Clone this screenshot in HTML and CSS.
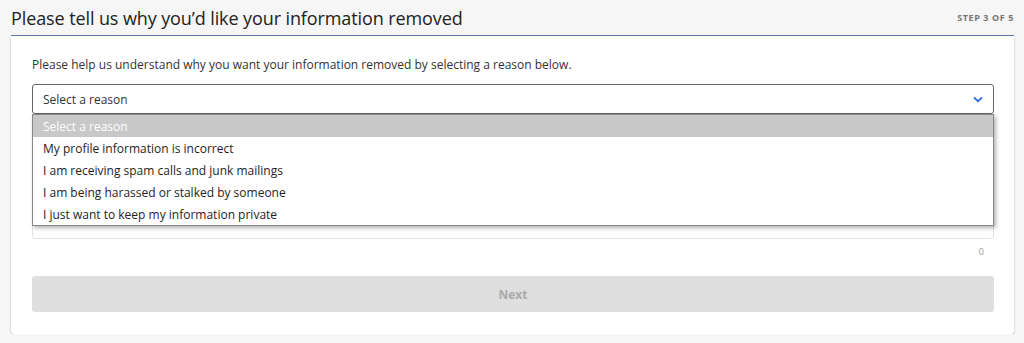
FILE: index.html
```html
<!DOCTYPE html>
<html lang="en">

<head>
    <meta charset="UTF-8">
    <meta name="viewport" content="width=device-width, initial-scale=1.0">
    <title>Remove my information</title>
    <link rel="stylesheet" href="styles.css">
</head>

<body>

    <div class="page">
        <div class="step-header">
            <h1>Please tell us why you’d like your information removed</h1>
            <span class="step-count">Step 3 of 5</span>
        </div>

        <div class="card">
            <p class="intro">Please help us understand why you want your information removed by selecting a reason below.</p>

            <div class="reason-field">
                <div class="reason-select">
                    <span>Select a reason</span>
                    <svg class="chevron" width="10" height="7" viewBox="0 0 10 7">
                        <path d="M1 1.5 L5 5.2 L9 1.5" fill="none" stroke="#2f6fe0" stroke-width="1.8"/>
                    </svg>
                </div>
                <ul class="reason-list">
                    <li class="placeholder">Select a reason</li>
                    <li>My profile information is incorrect</li>
                    <li>I am receiving spam calls and junk mailings</li>
                    <li>I am being harassed or stalked by someone</li>
                    <li>I just want to keep my information private</li>
                </ul>
            </div>

            <div class="details-box"></div>
            <div class="char-count">0</div>

            <button class="btn-next" disabled>Next</button>
        </div>
    </div>

</body>
</html>
```

FILE: styles.css
```css
body {
    margin: 0;
    font-family: "Open Sans", Arial, sans-serif;
    background-color: #f6f6f6;
    color: #333;
}

.page {
    padding: 0 10px 0 11px;
}

.step-header {
    display: flex;
    justify-content: space-between;
    align-items: center;
    height: 35px;
    border-bottom: 1px solid #6474aa;
}

.step-header h1 {
    margin: 0;
    font-size: 18px;
    font-weight: 400;
    letter-spacing: -0.1px;
    color: #222;
}

.step-count {
    font-size: 9px;
    font-weight: 700;
    letter-spacing: 0.6px;
    text-transform: uppercase;
    color: #777;
}

.card {
    background-color: #fff;
    padding: 20px 20px 22px 21px;
    box-shadow: 0 1px 2px rgba(0, 0, 0, 0.3);
    border-radius: 0 0 3px 3px;
}

.intro {
    margin: 0 0 10px;
    font-size: 12px;
    line-height: 18px;
}

.reason-field {
    position: relative;
}

.reason-select {
    display: flex;
    justify-content: space-between;
    align-items: center;
    height: 27px;
    padding: 1px 10px 0;
    border: 1px solid #666;
    border-radius: 3px;
    font-size: 12px;
    color: #333;
}

.reason-list {
    position: absolute;
    top: 100%;
    left: 0;
    right: 0;
    margin: 0;
    padding: 0;
    list-style: none;
    background-color: #fff;
    border: 1px solid #888;
    box-shadow: 2px 2px 4px rgba(0, 0, 0, 0.3);
    z-index: 2;
}

.reason-list li {
    height: 22px;
    line-height: 23px;
    padding: 0 10px;
    font-size: 12px;
    color: #1e1e1e;
}

.reason-list li.placeholder {
    background-color: #c8c8c8;
    color: #fff;
}

.details-box {
    height: 113px;
    margin-top: 10px;
    border: 1px solid #e2e2e2;
    border-radius: 3px;
}

.char-count {
    text-align: right;
    padding-right: 10px;
    margin-top: 6px;
    font-size: 9px;
    color: #999;
}

.btn-next {
    display: block;
    width: 100%;
    height: 36px;
    margin-top: 18px;
    border: none;
    border-radius: 3px;
    background-color: #dfdfdf;
    font-family: inherit;
    font-size: 12px;
    font-weight: 700;
    color: #aaa;
}
```
